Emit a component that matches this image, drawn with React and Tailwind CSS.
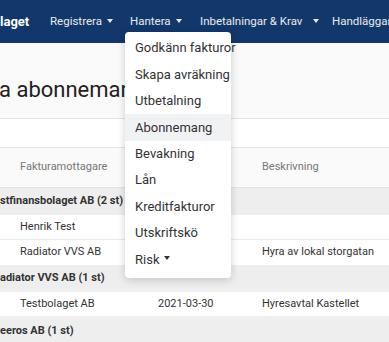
export default function App() {
  const Caret = () => (
    <span className="inline-block ml-[5px] align-middle w-0 h-0 border-l-[3.5px] border-r-[3.5px] border-t-[4px] border-l-transparent border-r-transparent border-t-current relative top-[-1px]" />
  );
  const items = ["Godkänn fakturor", "Skapa avräkning", "Utbetalning", "Abonnemang", "Bevakning", "Lån", "Kreditfakturor", "Utskriftskö"];
  return (
    <div className="relative w-[389px] h-[342px] overflow-hidden bg-[#fafafa] text-[#333]" style={{ fontFamily: "Roboto, 'Noto Sans', sans-serif" }}>
      <nav className="h-[43px] bg-[#12376a] flex items-center whitespace-nowrap text-[11.5px] text-white/90">
        <span className="shrink-0 text-[13px] font-bold text-white w-[50px]">laget</span>
        <span className="shrink-0 w-[80px]">Registrera<Caret /></span>
        <span className="shrink-0 w-[70px]">Hantera<Caret /></span>
        <span className="shrink-0 w-[132px]">Inbetalningar &amp; Krav <span className="ml-[3px]"><Caret /></span></span>
        <span className="shrink-0">Handläggare</span>
      </nav>
      <div className="h-[76px] border-b border-[#e3e3e3] flex items-end pb-[17px]">
        <h1 className="text-[22px] leading-none text-[#222] whitespace-nowrap -ml-[1px]">a abonnemang</h1>
      </div>
      <div className="h-[29px] bg-white border-b border-[#e6e6e6]" />
      <div className="text-[11px] whitespace-nowrap">
        <div className="h-[40px] flex items-center text-[#777] border-b border-[#e3e3e3]">
          <span className="pl-[20px] w-[158px]">Fakturamottagare</span>
          <span className="w-[104px]">Datum</span>
          <span>Beskrivning</span>
        </div>
        <div className="h-[27px] flex items-center bg-[#eeeeee] font-bold">stfinansbolaget AB (2 st)</div>
        <div className="h-[25px] flex items-center bg-white border-b border-[#eaeaea]">
          <span className="pl-[20px] w-[158px]">Henrik Test</span>
        </div>
        <div className="h-[25px] flex items-center bg-white">
          <span className="pl-[20px] w-[158px]">Radiator VVS AB</span>
          <span className="w-[104px]"></span>
          <span>Hyra av lokal storgatan</span>
        </div>
        <div className="h-[27px] flex items-center bg-[#eeeeee] font-bold">adiator VVS AB (1 st)</div>
        <div className="h-[24px] flex items-center bg-white">
          <span className="pl-[20px] w-[158px]">Testbolaget AB</span>
          <span className="w-[104px]">2021-03-30</span>
          <span>Hyresavtal Kastellet</span>
        </div>
        <div className="h-[30px] flex items-center bg-[#eeeeee] font-bold">eeros AB (1 st)</div>
      </div>
      <div className="absolute left-[125px] top-[32px] w-[106px] bg-white rounded-[4px] shadow-[0_2px_8px_rgba(0,0,0,0.18)] pt-[3px] pb-[5px] text-[13px] text-[#333] whitespace-nowrap">
        {items.map((t) => (
          <div key={t} className={"h-[26.4px] flex items-center pl-[10px] " + (t === "Abonnemang" ? "bg-[#f1f2f4]" : "")}>{t}</div>
        ))}
        <div className="h-[26.4px] flex items-center pl-[10px]">Risk<Caret /></div>
      </div>
    </div>
  );
}
